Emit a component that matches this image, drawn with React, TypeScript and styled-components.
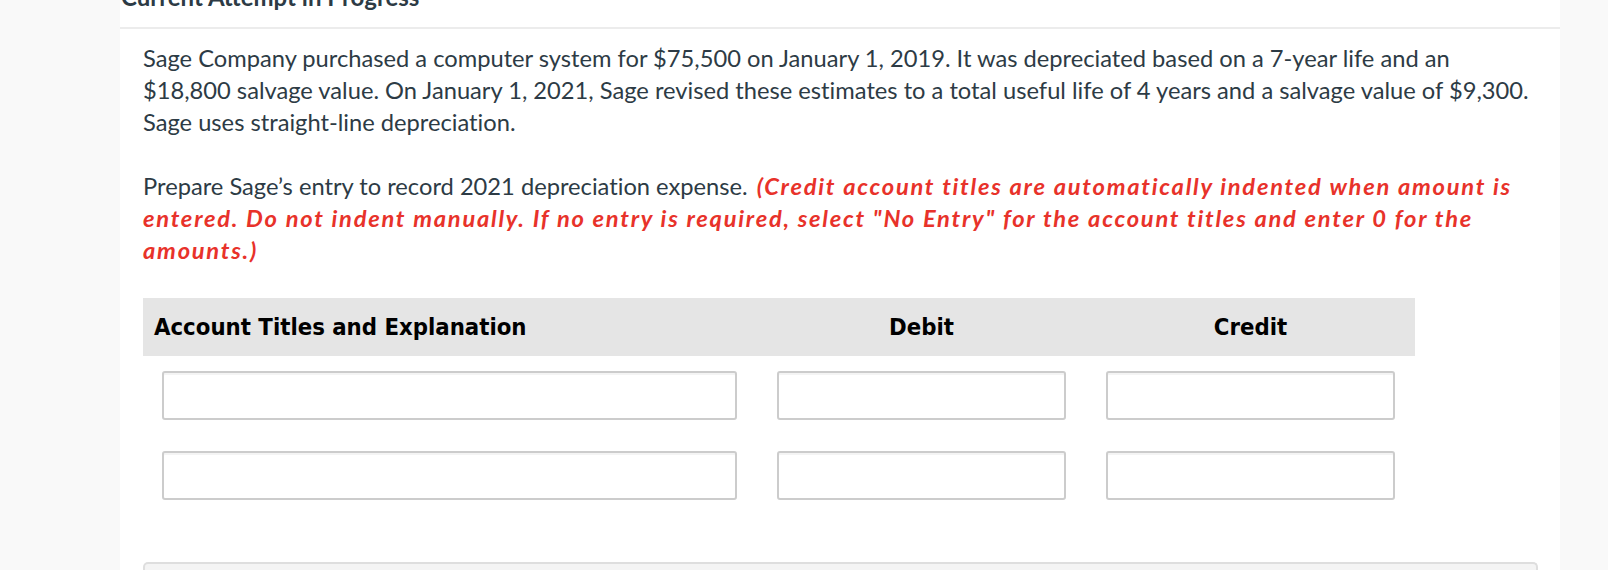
import React from "react";
import styled, { createGlobalStyle } from "styled-components";

const GlobalStyle = createGlobalStyle`
  html, body {
    margin: 0;
    padding: 0;
    background: #f9f9f9;
    font-family: "Lato", "Noto Sans", sans-serif;
    overflow: hidden;
  }
`;

const Page = styled.div`
  height: 570px;
  padding-left: 120px;
  overflow: hidden;
`;

const Card = styled.main`
  width: 1440px;
  min-height: 570px;
  background: #ffffff;
  box-sizing: border-box;
`;

const CardHeader = styled.header`
  padding-bottom: 16px;
  border-bottom: 2px solid #ececec;
`;

const Heading = styled.h2`
  margin: -17px 0 0 1px;
  font-family: "Lato", sans-serif;
  font-weight: 700;
  font-size: 24px;
  line-height: 28px;
  color: #2d3b45;
`;

const Body = styled.section`
  padding: 13px 22px 0 23px;
`;

const Para = styled.p`
  margin: 0 0 32px 0;
  width: 1388px;
  font-size: 23.7px;
  line-height: 32px;
  color: #2d3b45;
  font-variant-ligatures: none;
`;

const Note = styled.span`
  color: #e8322a;
  font-weight: 700;
  font-style: italic;
  letter-spacing: 1.75px;
  margin-left: 3px;
`;

const Table = styled.div`
  width: 1272px;
`;

const Row = styled.div<{ $head?: boolean }>`
  display: grid;
  grid-template-columns: 614px 329px 329px;
  background: ${(p) => (p.$head ? "#e5e5e5" : "transparent")};
  height: ${(p) => (p.$head ? "58px" : "80px")};
`;

const HeadCell = styled.div<{ $align?: "left" | "center" }>`
  display: flex;
  align-items: center;
  justify-content: ${(p) => (p.$align === "left" ? "flex-start" : "center")};
  padding-left: ${(p) => (p.$align === "left" ? "11px" : "0")};
  font-family: "DejaVu Sans Condensed", "DejaVu Sans", sans-serif;
  font-stretch: condensed;
  font-weight: 700;
  font-size: 23.7px;
  color: #000;
`;

const Cell = styled.div<{ $left?: number }>`
  padding: 15px 0 16px ${(p) => p.$left ?? 20}px;
`;

const Field = styled.input<{ $w: number }>`
  display: block;
  box-sizing: border-box;
  width: ${(p) => p.$w}px;
  height: 49px;
  margin: 0;
  border: 2px solid #cccccc;
  border-radius: 3px;
  box-shadow: inset 0 2px 0 #f4f4f4;
  background: #fff;
  font-family: "Lato", sans-serif;
  font-size: 20px;
  padding: 0 10px;
  outline: none;
`;

const NextBox = styled.div`
  margin-top: 46px;
  width: 1395px;
  height: 40px;
  box-sizing: border-box;
  border: 2px solid #dedede;
  border-bottom: none;
  border-radius: 5px 5px 0 0;
  background: #f4f4f4;
`;

const rows = [0, 1];

export default function App() {
  return (
    <>
      <GlobalStyle />
      <Page>
        <Card>
          <CardHeader>
            <Heading>Current Attempt in Progress</Heading>
          </CardHeader>
          <Body>
            <Para>
              Sage Company purchased a computer system for $75,500 on January 1, 2019. It was
              depreciated based on a 7-year life and an $18,800 salvage value. On January 1, 2021,
              Sage revised these estimates to a total useful life of 4 years and a salvage value of
              $9,300. Sage uses straight-line depreciation.
            </Para>
            <Para>
              Prepare Sage’s entry to record 2021 depreciation expense.{" "}
              <Note>
                (Credit account titles are automatically indented when amount is entered. Do not
                indent manually. If no entry is required, select "No Entry" for the account titles
                and enter 0 for the amounts.)
              </Note>
            </Para>
            <Table>
              <Row $head>
                <HeadCell $align="left">Account Titles and Explanation</HeadCell>
                <HeadCell>Debit</HeadCell>
                <HeadCell>Credit</HeadCell>
              </Row>
              {rows.map((r) => (
                <Row key={r}>
                  <Cell $left={19}>
                    <Field $w={575} type="text" aria-label="Account title" />
                  </Cell>
                  <Cell>
                    <Field $w={289} type="text" aria-label="Debit" />
                  </Cell>
                  <Cell>
                    <Field $w={289} type="text" aria-label="Credit" />
                  </Cell>
                </Row>
              ))}
            </Table>
            <NextBox />
          </Body>
        </Card>
      </Page>
    </>
  );
}
